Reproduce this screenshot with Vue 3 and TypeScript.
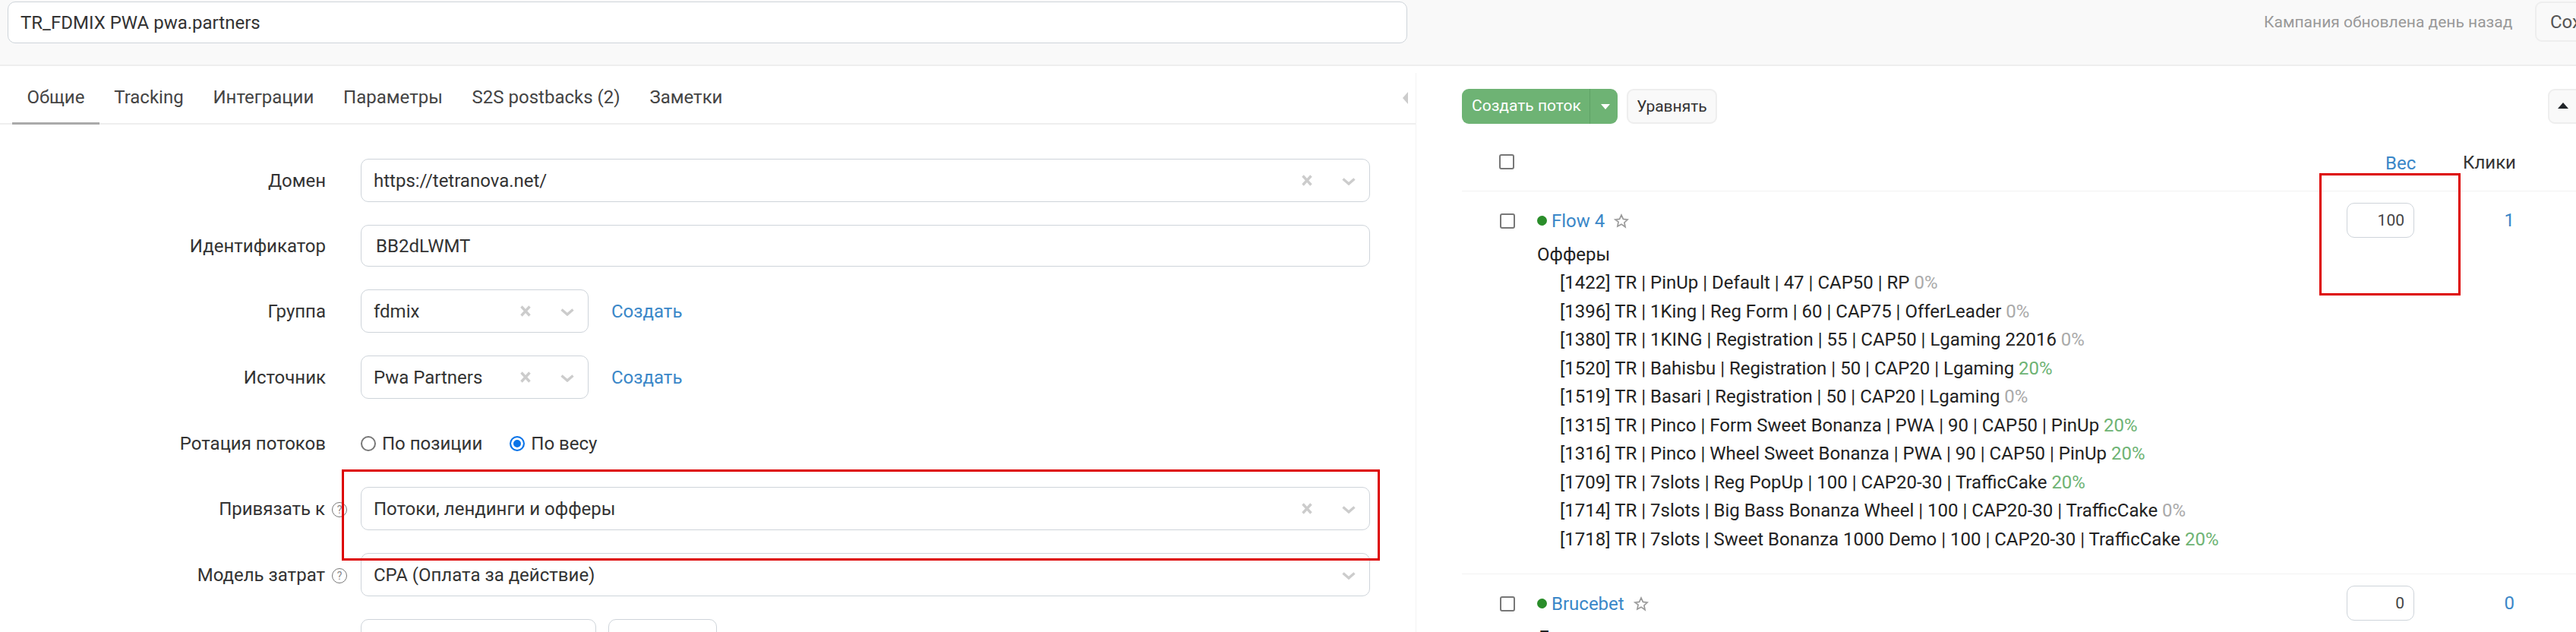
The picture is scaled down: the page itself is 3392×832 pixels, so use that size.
<script setup lang="ts">
interface Offer { text: string; pct: string; on: boolean }
const tabs: string[] = ['Общие', 'Tracking', 'Интеграции', 'Параметры', 'S2S postbacks (2)', 'Заметки']
const offers: Offer[] = [
  { text: '[1422] TR | PinUp | Default | 47 | CAP50 | RP', pct: '0%', on: false },
  { text: '[1396] TR | 1King | Reg Form | 60 | CAP75 | OfferLeader', pct: '0%', on: false },
  { text: '[1380] TR | 1KING | Registration | 55 | CAP50 | Lgaming 22016', pct: '0%', on: false },
  { text: '[1520] TR | Bahisbu | Registration | 50 | CAP20 | Lgaming', pct: '20%', on: true },
  { text: '[1519] TR | Basari | Registration | 50 | CAP20 | Lgaming', pct: '0%', on: false },
  { text: '[1315] TR | Pinco | Form Sweet Bonanza | PWA | 90 | CAP50 | PinUp', pct: '20%', on: true },
  { text: '[1316] TR | Pinco | Wheel Sweet Bonanza | PWA | 90 | CAP50 | PinUp', pct: '20%', on: true },
  { text: '[1709] TR | 7slots | Reg PopUp | 100 | CAP20-30 | TrafficCake', pct: '20%', on: true },
  { text: '[1714] TR | 7slots | Big Bass Bonanza Wheel | 100 | CAP20-30 | TrafficCake', pct: '0%', on: false },
  { text: '[1718] TR | 7slots | Sweet Bonanza 1000 Demo | 100 | CAP20-30 | TrafficCake', pct: '20%', on: true },
]
</script>

<template>
  <div class="page">
    <header class="top">
      <div class="field name">TR_FDMIX PWA pwa.partners</div>
      <span class="updated">Кампания обновлена день назад</span>
      <button class="save">Сохранить</button>
    </header>
    <main class="columns">
      <section class="left">
        <nav class="tabs">
          <a v-for="(t, i) in tabs" :key="t" class="tab" :class="{ active: i === 0 }">{{ t }}</a>
          <span class="tab-caret"></span>
        </nav>
        <div class="form">
          <div class="row r-domain">
            <label>Домен</label>
            <div class="field grow">https://tetranova.net/<span class="ctl"><svg class="x" viewBox="0 0 14 15"><path d="M1.5 1.5l11 12M12.5 1.5l-11 12" /></svg><svg class="chev" viewBox="0 0 18 10"><path d="M1.5 1.5L9 8l7.5-6.5" /></svg></span></div>
          </div>
          <div class="row r-id">
            <label>Идентификатор</label>
            <div class="field grow id">BB2dLWMT</div>
          </div>
          <div class="row r-group">
            <label>Группа</label>
            <div class="field short">fdmix<span class="ctl"><svg class="x" viewBox="0 0 14 15"><path d="M1.5 1.5l11 12M12.5 1.5l-11 12" /></svg><svg class="chev" viewBox="0 0 18 10"><path d="M1.5 1.5L9 8l7.5-6.5" /></svg></span></div>
            <a class="link">Создать</a>
          </div>
          <div class="row r-source">
            <label>Источник</label>
            <div class="field short">Pwa Partners<span class="ctl"><svg class="x" viewBox="0 0 14 15"><path d="M1.5 1.5l11 12M12.5 1.5l-11 12" /></svg><svg class="chev" viewBox="0 0 18 10"><path d="M1.5 1.5L9 8l7.5-6.5" /></svg></span></div>
            <a class="link">Создать</a>
          </div>
          <div class="row r-radio">
            <label>Ротация потоков</label>
            <span class="radio"></span><span class="rtext">По позиции</span>
            <span class="radio on"></span><span class="rtext">По весу</span>
          </div>
          <div class="row r-bind">
            <label class="help">Привязать к <span class="q">?</span></label>
            <div class="field grow">Потоки, лендинги и офферы<span class="ctl"><svg class="x" viewBox="0 0 14 15"><path d="M1.5 1.5l11 12M12.5 1.5l-11 12" /></svg><svg class="chev" viewBox="0 0 18 10"><path d="M1.5 1.5L9 8l7.5-6.5" /></svg></span></div>
          </div>
          <div class="row r-cost">
            <label class="help">Модель затрат <span class="q">?</span></label>
            <div class="field grow">CPA (Оплата за действие)<span class="ctl"><svg class="chev" viewBox="0 0 18 10"><path d="M1.5 1.5L9 8l7.5-6.5" /></svg></span></div>
          </div>
          <div class="row r-last">
            <label></label>
            <div class="field w-a"></div>
            <div class="field w-b"></div>
          </div>
        </div>
      </section>
      <section class="right">
        <div class="toolbar">
          <div class="split"><span class="split-main">Создать поток</span><span class="split-arrow"></span></div>
          <button class="plain">Уравнять</button>
          <button class="up"><span></span></button>
        </div>
        <div class="thead">
          <span class="check"></span>
          <a class="weight">Вес</a>
          <span class="clicks">Клики</span>
        </div>
        <div class="flow flow-1">
          <span class="check"></span>
          <div class="flow-body">
            <div class="flow-title"><i class="dot"></i><a class="flow-name">Flow 4</a><svg class="star" viewBox="0 0 24 24"><path d="M12 2.5l2.9 6.4 7 .8-5.2 4.7 1.4 6.9L12 17l-6.1 3.3 1.4-6.9L2.1 9.7l7-.8z" /></svg></div>
            <div class="offers-h">Офферы</div>
            <div v-for="o in offers" :key="o.text" class="offer">{{ o.text }} <span :class="o.on ? 'pct-on' : 'pct-off'">{{ o.pct }}</span></div>
          </div>
          <div class="num">100</div>
          <a class="cnt">1</a>
        </div>
        <div class="flow flow-2">
          <span class="check"></span>
          <div class="flow-body">
            <div class="flow-title"><i class="dot"></i><a class="flow-name">Brucebet</a><svg class="star" viewBox="0 0 24 24"><path d="M12 2.5l2.9 6.4 7 .8-5.2 4.7 1.4 6.9L12 17l-6.1 3.3 1.4-6.9L2.1 9.7l7-.8z" /></svg></div>
            <div class="offers-h">Лендинги</div>
          </div>
          <div class="num">0</div>
          <a class="cnt">0</a>
        </div>
      </section>
    </main>
    <div class="mark m1"></div>
    <div class="mark m2"></div>
  </div>
</template>

<style>
html, body { margin: 0; background: #fff; overflow: hidden; }
</style>

<style scoped>
.page { position: relative; width: 3392px; height: 832px; overflow: hidden; font-family: Roboto, "Liberation Sans", sans-serif; font-size: 24px; color: #212529; background: #fff; }
.top { height: 87px; box-sizing: border-box; background: #f9f9f9; border-bottom: 2px solid #eee; display: flex; padding: 2px 0 0 10px; align-items: flex-start; }
.field { box-sizing: border-box; height: 57px; border: 1px solid #ced4da; border-radius: 10px; background: #fff; display: flex; align-items: center; padding-left: 16px; position: relative; color: #333; flex: none; }
.name { width: 1843px; height: 55px; }
.updated { margin-left: 1128px; width: 327px; flex: none; color: #999; font-size: 21px; line-height: 54px; white-space: nowrap; }
.save { box-sizing: border-box; margin-left: 30px; width: 200px; height: 53px; flex: none; background: #f9f9f9; border: 2px solid #eee; border-radius: 9px; font: inherit; color: #555; text-align: left; padding-left: 18px; white-space: nowrap; }
.columns { display: flex; height: 745px; }
.left { width: 1865px; box-sizing: border-box; border-right: 1px solid #f3f3f3; margin-top: 9px; flex: none; }
.tabs { height: 68px; box-sizing: border-box; border-bottom: 2px solid #eee; display: flex; padding-left: 16px; position: relative; }
.tab { box-sizing: border-box; height: 68px; padding: 18px 19.4px 0; color: #444; white-space: nowrap; }
.tab.active { border-bottom: 3px solid #aaa; }
.tab-caret { position: absolute; right: 10px; top: 25px; border: 8px solid transparent; border-right: 7px solid #ccc; border-left: 0; }
.form { padding-top: 45px; }
.row { display: flex; align-items: center; }
.row label { width: 429px; flex: none; text-align: right; color: #333; white-space: nowrap; margin-right: 46px; }
.row label.help { width: 457px; margin-right: 18px; }
.grow { width: 1329px; }
.id { padding-left: 19px; height: 55px; }
.short { width: 300px; }
.link { margin-left: 30px; color: #3a87c8; }
.r-id, .r-group, .r-source, .r-cost, .r-last { margin-top: 30px; }
.r-radio { margin-top: 30px; height: 57px; }
.r-bind { margin-top: 29px; }
.w-a { width: 310px; }
.w-b { width: 143px; margin-left: 16px; }
.ctl { position: absolute; right: 0; top: 0; height: 100%; display: flex; align-items: center; }
.x { width: 14px; height: 15px; margin-right: 39px; fill: none; stroke: #ccc; stroke-width: 3.4; }
.chev { width: 18px; height: 10px; margin-right: 18px; margin-top: 3px; fill: none; stroke: #ccc; stroke-width: 3.4; }
.radio { box-sizing: border-box; width: 20px; height: 20px; border-radius: 50%; border: 2px solid #777; flex: none; }
.radio.on { border-color: #0a74e8; background: #0a74e8; box-shadow: inset 0 0 0 3px #fff; }
.rtext { margin-left: 8px; margin-right: 36px; color: #333; }
.q { display: inline-flex; width: 20px; height: 20px; box-sizing: border-box; border: 1px solid #777; border-radius: 50%; font-size: 14px; color: #888; align-items: center; justify-content: center; vertical-align: 2px; margin-left: 3px; }
.right { flex: 1; min-width: 0; padding: 30px 0 0 60px; }
.toolbar { display: flex; height: 46px; align-items: stretch; }
.split { display: flex; width: 205px; height: 46px; background: #6eb374; border-radius: 9px; color: #fff; font-size: 21px; align-items: center; }
.split-main { width: 169px; box-sizing: border-box; padding-left: 13px; border-right: 1px solid #5fa266; height: 100%; line-height: 44px; white-space: nowrap; }
.split-arrow { margin-left: 14px; border: 6px solid transparent; border-top: 7px solid #fff; border-bottom: 0; }
.plain { box-sizing: border-box; margin-left: 12px; width: 119px; height: 46px; background: #f9f9f9; border: 2px solid #eee; border-radius: 9px; font: inherit; font-size: 21px; color: #333; padding: 0; }
.up { box-sizing: border-box; margin-left: auto; margin-right: -13px; width: 50px; height: 46px; background: #f9f9f9; border: 2px solid #eee; border-radius: 9px; padding: 0 0 0 11px; display: flex; align-items: center; }
.up span { border: 7px solid transparent; border-bottom: 8px solid #212529; border-top: 0; display: block; margin-bottom: 3px; }
.check { box-sizing: border-box; width: 20px; height: 20px; border: 2px solid #777; border-radius: 3px; flex: none; display: block; }
.thead { position: relative; height: 89px; box-sizing: border-box; border-bottom: 1px solid #f2f2f2; }
.thead .check { position: absolute; left: 49px; top: 40px; }
.weight { position: absolute; left: 1216px; top: 38px; color: #3a87c8; }
.clicks { position: absolute; left: 1318px; top: 37px; color: #333; }
.flow { position: relative; box-sizing: border-box; border-bottom: 1px solid #f2f2f2; display: flex; }
.flow-1 { height: 504px; }
.flow-2 { height: 76px; border-bottom: 0; }
.flow > .check { position: absolute; left: 50px; top: 29px; }
.flow-body { position: absolute; left: 99px; top: 0; }
.flow-title { display: flex; align-items: center; height: 25px; margin-top: 26px; }
.dot { width: 13px; height: 13px; border-radius: 50%; background: #2a8d2a; margin-right: 6px; }
.flow-name { color: #3a87c8; }
.star { width: 20px; height: 20px; margin-left: 12px; fill: none; stroke: #999; stroke-width: 2; }
.offers-h { margin-top: 13px; line-height: 38px; color: #222; white-space: nowrap; }
.offer { height: 37.5px; line-height: 37.5px; padding-left: 30px; color: #222; white-space: nowrap; }
.pct-off { color: #aaa; }
.pct-on { color: #6eb374; }
.num { position: absolute; left: 1165px; top: 15px; box-sizing: border-box; width: 89px; height: 46px; border: 1px solid #ced4da; border-radius: 10px; text-align: right; padding-right: 12px; line-height: 44px; color: #444; font-size: 21px; }
.cnt { position: absolute; left: 1340px; top: 24px; width: 46px; text-align: right; color: #3a87c8; }
.mark { position: absolute; border: 3px solid #dd0000; box-sizing: border-box; pointer-events: none; }
.m1 { left: 450px; top: 618px; width: 1367px; height: 120px; }
.m2 { left: 3054px; top: 228px; width: 186px; height: 161px; }
</style>
